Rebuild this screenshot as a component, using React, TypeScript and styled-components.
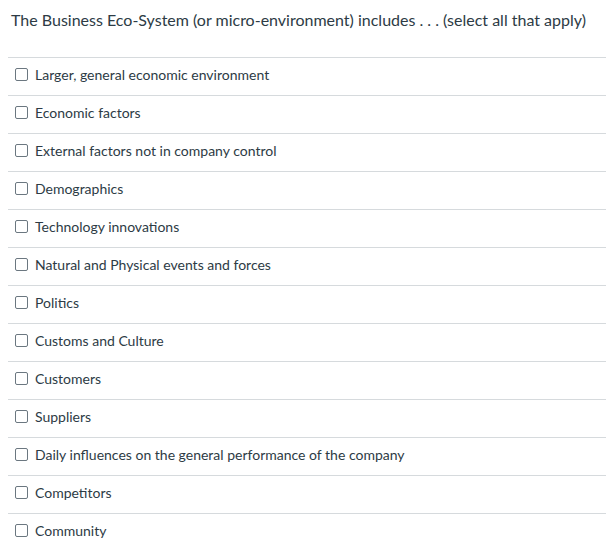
import React from 'react';
import styled, { createGlobalStyle } from 'styled-components';

const GlobalStyle = createGlobalStyle`
  html, body {
    margin: 0;
    padding: 0;
    background: #ffffff;
  }
  body {
    font-family: Lato, "Liberation Sans", sans-serif;
    color: #2d3b45;
  }
`;

const Question = styled.div`
  padding: 8px 1px 0 8px;
`;

const QuestionText = styled.div`
  font-size: 16px;
  line-height: 24px;
  padding-left: 3px;
  height: 49px;
  border-bottom: 1px solid #d6dadd;
`;

const Answers = styled.div`
  display: flex;
  flex-direction: column;
`;

const AnswerRow = styled.label<{ $last?: boolean }>`
  display: flex;
  align-items: center;
  gap: 7px;
  height: 32px;
  padding: 0 0 5px 7px;
  border-bottom: ${(p) => (p.$last ? 'none' : '1px solid #d6dadd')};
  font-size: 14px;
  color: #2d3b45;
`;

const Box = styled.span`
  display: inline-block;
  width: 11px;
  height: 11px;
  border: 1px solid #6b7780;
  border-radius: 2px;
  background: #fff;
  flex-shrink: 0;
`;

const answers = [
  'Larger, general economic environment',
  'Economic factors',
  'External factors not in company control',
  'Demographics',
  'Technology innovations',
  'Natural and Physical events and forces',
  'Politics',
  'Customs and Culture',
  'Customers',
  'Suppliers',
  'Daily influences on the general performance of the company',
  'Competitors',
  'Community',
];

const App = () => {
  return (
    <>
      <GlobalStyle />
      <Question>
        <QuestionText>
          The Business Eco-System (or micro-environment) includes . . . (select all that apply)
        </QuestionText>
        <Answers>
          {answers.map((a, i) => (
            <AnswerRow key={a} $last={i === answers.length - 1}>
              <Box />
              {a}
            </AnswerRow>
          ))}
        </Answers>
      </Question>
    </>
  );
};

export default App;
